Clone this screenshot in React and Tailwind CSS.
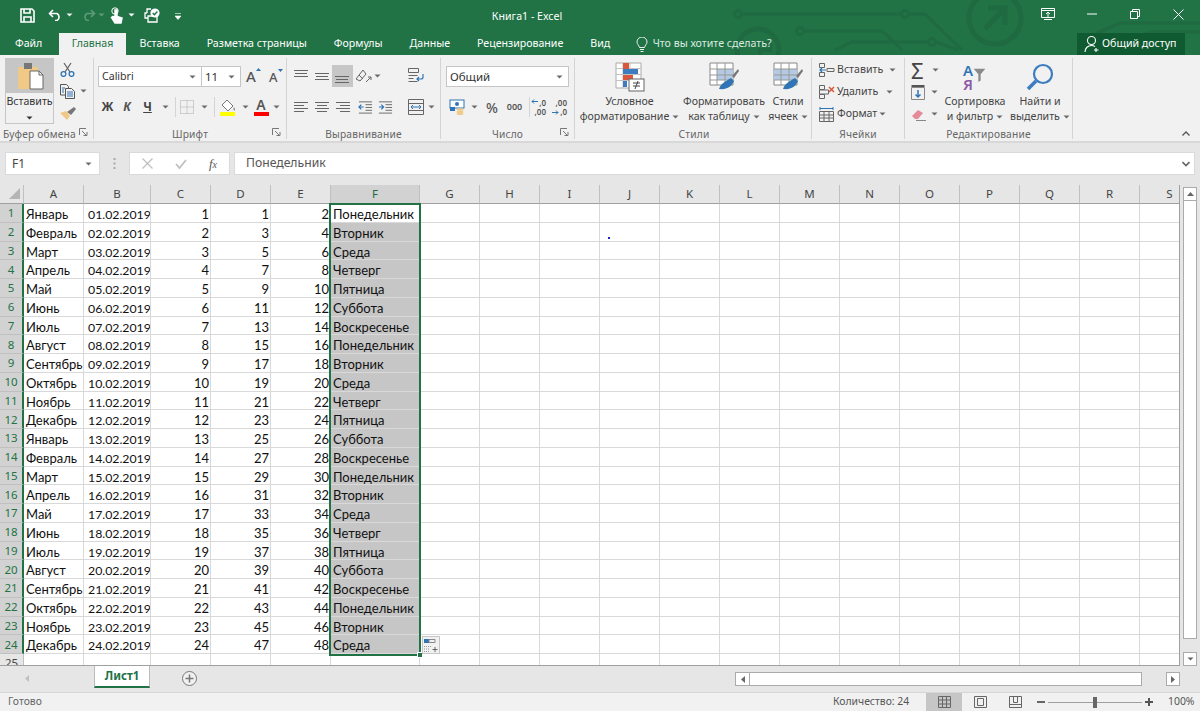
import React from "react";

const G = "#217346";
const Caret = ({ c = "#6a6a6a", cls = "" }) => (
  <svg width="7" height="4" viewBox="0 0 7 4" className={`shrink-0 ${cls}`}><path d="M0.5 0.5h6L3.5 3.5z" fill={c} /></svg>
);
const Launcher = () => (
  <svg width="9" height="9" viewBox="0 0 9 9" className="absolute right-[5px] bottom-[2px]"><path d="M0.5 7V.5H7M3 3l4 4M4.5 7.5H8V4" fill="none" stroke="#777" strokeWidth="1" /></svg>
);
const Lines = ({ ys, xs }) => (
  <svg width="15" height="14" viewBox="0 0 15 14">
    {ys.map((y, i) => <path key={i} d={`M${xs[i][0]} ${y}H${xs[i][1]}`} stroke="#666" strokeWidth="1" />)}
  </svg>
);
const Cell = ({ w, children }) => <div className={`flex items-center justify-center shrink-0 ${w}`}>{children}</div>;

function Watermark() {
  return (
    <svg width="1200" height="55" viewBox="0 0 1200 55" className="absolute left-0 top-0" fill="none" stroke="#1f6a41" strokeWidth="3">
      <circle cx="738" cy="14" r="3.5" />
      <path d="M742 14H901" />
      <circle cx="905" cy="14" r="3.5" />
      <path d="M909 14H925L962 50" />
      <path d="M802 31H882L902 50" />
      <circle cx="800" cy="31" r="3.5" />
      <path d="M835 50L852 42H928" />
      <circle cx="932" cy="42" r="3.5" />
      <path d="M936 42L958 50" />
      <circle cx="758" cy="50" r="21" strokeWidth="5" />
      <path d="M750 43H770V50H760V58" strokeWidth="4" />
      <circle cx="995" cy="18" r="26" strokeWidth="5" />
      <path d="M985 29L1003 10M988 8H1005V25" strokeWidth="5" />
      <path d="M1097 33L1120 23H1200M1130 40L1150 32H1200" />
    </svg>
  );
}

function Qat() {
  return (
    <div className="relative flex items-center h-[30px] pl-[20px]">
      <svg width="15" height="15" viewBox="0 0 15 15" className="mr-[13px]" fill="none" stroke="#fff" strokeWidth="1.6"><path d="M1 1h11l2 2v11H1z" /><path d="M4 1v4h6V1M4 14V9h7v5" /></svg>
      <svg width="15" height="12" viewBox="0 0 15 12" fill="none" stroke="#fff" strokeWidth="1.6"><path d="M5 1L1.5 4.5 5 8M2 4.5h7a4 4 0 0 1 0 7H7" /></svg>
      <Caret c="#e8f0eb" cls="ml-[3px] mr-[8px]" />
      <svg width="15" height="12" viewBox="0 0 15 12" fill="none" stroke="#5f9b7a" strokeWidth="1.6"><path d="M10 1l3.5 3.5L10 8M13 4.5H6a4 4 0 0 0 0 7h2" /></svg>
      <Caret c="#5f9b7a" cls="ml-[2px] mr-[5px]" />
      <svg width="13" height="17" viewBox="0 0 13 17" fill="none" stroke="#fff" strokeWidth="1.5"><circle cx="5" cy="4" r="3.2" strokeWidth="1" /><path d="M5 3v8L3 9.5 1.5 10.5 5 16h6l1-5-5-1.5V3z" fill="#fff" /></svg>
      <Caret c="#fff" cls="ml-[5px] mr-[9px]" />
      <svg width="17" height="15" viewBox="0 0 17 15" fill="none" stroke="#fff" strokeWidth="1.3"><path d="M3 5H1v5h3M4 8h9v6H4zM3 5V1h4" /><circle cx="11" cy="5" r="4.6" fill="#fff" stroke="none" /><path d="M8.7 5l1.7 1.8 3-3.2" stroke={G} strokeWidth="1.4" /></svg>
      <svg width="7" height="7" viewBox="0 0 7 7" className="ml-[14px] mt-[2px]"><path d="M0 0.5h6M0 3h6L3 6.5z" stroke="#fff" strokeWidth=".6" fill="#fff" /></svg>
    </div>
  );
}

function TitleControls() {
  return (
    <div className="absolute right-0 top-0 h-[28px] flex items-center text-white">
      <Cell w="w-[44px]"><svg width="14" height="12" viewBox="0 0 14 12" fill="none" stroke="#fff"><path d="M.5.500h13v9H.5zM.5 2.500h13M7 9V4.500M5 6l2-2 2 2M3 11.500h8" /></svg></Cell>
      <Cell w="w-[43px]"><svg width="10" height="2" viewBox="0 0 10 2"><path d="M0 1h10" stroke="#fff" /></svg></Cell>
      <Cell w="w-[43px]"><svg width="10" height="10" viewBox="0 0 10 10" fill="none" stroke="#fff"><path d="M.5 2.500h7v7h-7zM2.500 2.500v-2h7v7h-2" /></svg></Cell>
      <Cell w="w-[44px]"><svg width="11" height="11" viewBox="0 0 11 11" fill="none" stroke="#fff"><path d="M.5.500l10 10M10.500.500l-10 10" /></svg></Cell>
    </div>
  );
}

function Tabs() {
  const tabs = ["Файл", "Главная", "Вставка", "Разметка страницы", "Формулы", "Данные", "Рецензирование", "Вид"];
  return (
    <div className="relative flex h-[25px] items-end text-[10.6px] text-white">
      {tabs.map((t, i) =>
        i === 1 ? (
          <div key={t} className="h-[22px] w-[67px] bg-[#f1f1f1] text-[#217346] flex items-center justify-center">{t}</div>
        ) : (
          <div key={t} className={`h-[22px] flex items-center ${i === 0 ? "w-[59px] pl-[15px]" : "px-[13.5px]"}`}>{t}</div>
        )
      )}
      <div className="h-[22px] flex items-center ml-[12px] text-[#dcebe2]">
        <svg width="12" height="15" viewBox="0 0 12 15" fill="none" stroke="#e8f0eb" className="mr-[5px]"><path d="M3.500 10.500C3 8 1 7.500 1 5a5 5 0 0 1 10 0c0 2.500-2 3-2.500 5.500zM4 12.500h4M4.500 14.500h3" /></svg>
        Что вы хотите сделать?
      </div>
      <div className="absolute left-[1077px] top-[3px] w-[108px] h-[22px] bg-[#0f5a31] flex items-center pl-[7px]">
        <svg width="16" height="18" viewBox="0 0 16 18" fill="none" stroke="#fff" strokeWidth="1.1" className="mr-[2px]"><circle cx="7.500" cy="5.500" r="4" /><path d="M1 17c0-4 3-6.500 6.500-6.500 1.500 0 2.500.4 3.500 1M12 13v4M10 15h4.500" /></svg>
        Общий доступ
      </div>
    </div>
  );
}

const Sel = ({ w, text, cls = "" }) => (
  <div className={`h-[21px] bg-white border border-[#c6c6c6] flex items-center justify-between pl-[3px] pr-[5px] text-[#333] ${w} ${cls}`}>
    <span>{text}</span><Caret />
  </div>
);

function Group({ cls, label, launcher, children }) {
  return (
    <section className={`relative shrink-0 h-[81px] border-r border-[#d4d4d4] flex flex-col ${cls}`}>
      <div className="h-[68px] flex">{children}</div>
      <div className="h-[13px] pt-[2px] text-center text-[10.2px] leading-[13px] text-[#666] tracking-[0.2px]">{label}</div>
      {launcher && <Launcher />}
    </section>
  );
}

function Clipboard() {
  return (
    <Group cls="w-[94px]" label={<span className="block text-left pl-[3px]">Буфер обмена</span>} launcher>
      <div className="ml-[5px] w-[49px] h-[66px] border border-[#c6c6c6] flex flex-col">
        <div className="h-[34px] bg-[#c6c6c6] flex items-center justify-center">
          <svg width="28" height="28" viewBox="0 0 28 28"><path d="M2 5h20v22H2z" fill="#f0c987" /><rect x="8" y="1" width="8" height="6" fill="#777" /><path d="M14 9h9l4 4v14H14z" fill="#fff" stroke="#666" /><path d="M23 9v4h4" fill="none" stroke="#666" /></svg>
        </div>
        <div className="flex flex-col items-center text-[10.6px] text-[#333] pt-[1px] leading-[14px]">Вставить<Caret c="#333" cls="mt-[8px]" /></div>
      </div>
      <div className="flex flex-col pl-[3px] w-[38px]">
        <div className="h-[22px] flex items-center pl-[3px]"><svg width="15" height="15" viewBox="0 0 15 15" fill="none"><path d="M4 1l6 9M11 1L5 10" stroke="#666" strokeWidth="1.300" /><circle cx="3.500" cy="12" r="2.400" stroke="#2f75b5" strokeWidth="1.300" /><circle cx="11.500" cy="12" r="2.400" stroke="#2f75b5" strokeWidth="1.300" /></svg></div>
        <div className="h-[22px] flex items-center pl-[3px]">
          <svg width="15" height="15" viewBox="0 0 15 15" fill="none" stroke="#555"><path d="M.5.500h6l2 2V11h-8z" /><path d="M5.500 4.500h6l3 3v7h-9z" fill="#f1f1f1" /><path d="M2 4h3M2 6h2M2 8h2M7 8h6M7 10h6M7 12h6" stroke="#2f75b5" /></svg>
          <Caret cls="ml-[5px]" />
        </div>
        <div className="h-[22px] flex items-center pl-[3px]"><svg width="16" height="15" viewBox="0 0 16 15"><path d="M0 7l6-2 4 5-3 4z" fill="#f0c987" /><path d="M7 6l7-5 2 2-5 6z" fill="#777" /></svg></div>
      </div>
    </Group>
  );
}

function Font() {
  return (
    <Group cls="w-[193px]" label="Шрифт" launcher>
      <div className="pl-[4px] pt-[8px] flex flex-col">
        <div className="flex items-center h-[21px]">
          <Sel w="w-[104px]" text="Calibri" cls="text-[10.6px]" />
          <Sel w="w-[40px]" text="11" cls="ml-[-1px] text-[11.5px]" />
          <div className="ml-[5px] w-[21px] text-[15px] text-[#555] font-medium flex"><span>A</span><svg width="5" height="3" viewBox="0 0 5 3" className="mt-[3px]"><path d="M0 3l2.500-3L5 3z" fill="#2f75b5" /></svg></div>
          <div className="ml-[2px] w-[18px] text-[13px] text-[#555] font-medium flex mt-[2px]"><span>A</span><svg width="5" height="3" viewBox="0 0 5 3" className="mt-[1px]"><path d="M0 0l2.500 3L5 0z" fill="#2f75b5" /></svg></div>
        </div>
        <div className="flex items-center h-[20px] mt-[10px] text-[#444]">
          <Cell w="w-[19px]"><b className="text-[12px]">Ж</b></Cell>
          <Cell w="w-[20px]"><b className="text-[12px] italic text-[#555]">К</b></Cell>
          <Cell w="w-[21px]"><b className="text-[12px] underline">Ч</b></Cell>
          <Cell w="w-[14px]"><Caret /></Cell>
          <div className="w-px h-[20px] bg-[#d4d4d4] ml-[3px]" />
          <Cell w="w-[22px]"><svg width="14" height="14" viewBox="0 0 14 14" fill="none" stroke="#aaa" strokeDasharray="1 1"><path d="M.5.500h13v13H.5zM7 .5v13M.5 7h13" /></svg></Cell>
          <Cell w="w-[13px]"><Caret /></Cell>
          <div className="w-px h-[20px] bg-[#d4d4d4] ml-[3px]" />
          <Cell w="w-[26px]"><svg width="16" height="17" viewBox="0 0 16 17"><path d="M7 1l6 6-5 5-6-6z" fill="#fff" stroke="#777" /><path d="M14 8c1 2 1.500 3 .5 3.500S13 10 14 8z" fill="#888" /><rect y="13" width="15" height="4" fill="#ffff00" /></svg></Cell>
          <Cell w="w-[8px]"><Caret /></Cell>
          <Cell w="w-[24px]"><div className="flex flex-col items-center w-[15px] leading-[12px] text-[14px] font-semibold text-[#555]"><span>A</span><span className="w-[15px] h-[4px] bg-[#ff0000] mt-[1px]" /></div></Cell>
          <Cell w="w-[6px]"><Caret /></Cell>
        </div>
      </div>
    </Group>
  );
}

function Align() {
  const A = ({ ys, xs }) => <Lines ys={ys} xs={xs} />;
  const f = [0, 14];
  return (
    <Group cls="w-[154px]" label="Выравнивание">
      <div className="pl-[7px] pt-[7px] flex flex-col">
        <div className="flex items-center h-[22px]">
          <Cell w="w-[15px]"><A ys={[1.500, 4.500, 7.500]} xs={[f, [1, 13], f]} /></Cell>
          <Cell w="w-[6px]"><span /></Cell>
          <Cell w="w-[15px]"><A ys={[4.500, 7.500, 10.500]} xs={[f, [1, 13], f]} /></Cell>
          <div className="w-[21px] h-[22px] bg-[#c6c6c6] ml-[2px] flex items-center justify-center"><A ys={[7.500, 10.500, 13.500]} xs={[f, [1, 13], f]} /></div>
          <Cell w="w-[20px]"><svg width="17" height="15" viewBox="0 0 17 15" fill="none" stroke="#666"><path d="M1 10L8 1l3 4-6 7zM4 6l4 4M11 13l5-5M16 8h-3M16 8v3" /></svg></Cell>
          <Cell w="w-[9px]"><Caret /></Cell>
        </div>
        <div className="flex items-center h-[20px] mt-[10px]">
          <Cell w="w-[15px]"><A ys={[2.500, 5.500, 8.500, 11.500]} xs={[f, [0, 10], f, [0, 10]]} /></Cell>
          <Cell w="w-[6px]"><span /></Cell>
          <Cell w="w-[15px]"><A ys={[2.500, 5.500, 8.500, 11.500]} xs={[f, [2, 12], f, [2, 12]]} /></Cell>
          <Cell w="w-[6px]"><span /></Cell>
          <Cell w="w-[15px]"><A ys={[2.500, 5.500, 8.500, 11.500]} xs={[f, [4, 14], f, [4, 14]]} /></Cell>
          <Cell w="w-[7px]"><span /></Cell>
          <Cell w="w-[15px]"><svg width="16" height="14" viewBox="0 0 16 14" fill="none"><path d="M1 1.500h14M8 4.500h7M8 7.500h7M8 10.500h7M1 13.500h14" stroke="#666" /><path d="M6 7H1M3.500 4.500L1 7l2.500 2.500" stroke="#2f75b5" strokeWidth="1.300" /></svg></Cell>
          <Cell w="w-[5px]"><span /></Cell>
          <Cell w="w-[15px]"><svg width="16" height="14" viewBox="0 0 16 14" fill="none"><path d="M1 1.500h14M1 13.500h14M8 4.500h7M8 7.500h7M8 10.500h7" stroke="#666" /><path d="M1 7h5M3.500 4.500L6 7 3.500 9.500" stroke="#2f75b5" strokeWidth="1.300" /></svg></Cell>
        </div>
      </div>
      <div className="pl-[15px] pt-[7px] flex flex-col">
        <div className="h-[20px] flex items-center"><svg width="16" height="15" viewBox="0 0 16 15" fill="none"><path d="M.5.500h10v4H.5zM.5 7.500h9M.5 10.500h5M.5 13.500h9" stroke="#666" /><path d="M15 6v3a2 2 0 0 1-2 2H9M11 9l-2 2 2 2" stroke="#2f75b5" strokeWidth="1.200" /></svg></div>
        <div className="h-[20px] mt-[12px] flex items-center"><svg width="16" height="16" viewBox="0 0 16 16" fill="none"><path d="M.5.500h15v15H.5zM.5 4.500h15M.5 11.500h15" stroke="#666" /><path d="M3 8h10M5 6L3 8l2 2M11 6l2 2-2 2" stroke="#2f75b5" /></svg><Caret cls="ml-[4px]" /></div>
      </div>
    </Group>
  );
}

function NumberG() {
  return (
    <Group cls="w-[134px]" label="Число" launcher>
      <div className="pl-[5px] pt-[8px] flex flex-col">
        <Sel w="w-[123px]" text="Общий" cls="text-[11.5px]" />
        <div className="flex items-center h-[20px] mt-[10px]">
          <Cell w="w-[21px]"><svg width="16" height="16" viewBox="0 0 16 16"><rect x="1" y="1" width="14" height="8" fill="#fff" stroke="#2f75b5" /><circle cx="8" cy="5" r="2" fill="#2f75b5" /><rect x="1" y="8" width="5" height="4" fill="#2f75b5" /><ellipse cx="11" cy="10.500" rx="3.500" ry="1.200" fill="#f0c987" /><ellipse cx="11" cy="13" rx="3.500" ry="1.200" fill="#f0c987" /><ellipse cx="11" cy="15" rx="3.500" ry="1" fill="#f0c987" /></svg></Cell>
          <Cell w="w-[14px]"><Caret /></Cell>
          <Cell w="w-[22px]"><span className="text-[14px] text-[#555] font-medium">%</span></Cell>
          <Cell w="w-[23px]"><span className="text-[9px] text-[#555] font-semibold">000</span></Cell>
          <div className="w-px h-[20px] bg-[#d4d4d4] ml-[3px]" />
          <Cell w="w-[17px]">
            <span className="relative text-[8px] leading-[9px] text-[#555] text-right font-semibold pl-[2px] w-[15px]">,0<br />,00
              <svg width="7" height="5" viewBox="0 0 7 5" fill="none" stroke="#2f75b5" className="absolute left-0 top-[1px]"><path d="M7 2.500H1M3 .5l-2 2 2 2" /></svg>
            </span>
          </Cell>
          <Cell w="w-[4px]"><span /></Cell>
          <Cell w="w-[17px]">
            <span className="relative text-[8px] leading-[9px] text-[#555] text-right font-semibold w-[15px]">,00<br />,0
              <svg width="7" height="5" viewBox="0 0 7 5" fill="none" stroke="#2f75b5" className="absolute left-0 bottom-[1px]"><path d="M0 2.500h6M4 .5l2 2-2 2" /></svg>
            </span>
          </Cell>
        </div>
      </div>
    </Group>
  );
}

const Big = ({ w, icon, l1, l2, mt = "mt-[4px]" }) => (
  <div className={`shrink-0 flex flex-col items-center text-[10.6px] leading-[15px] text-[#444] ${w}`}>
    <div className={`h-[30px] flex items-center ${mt}`}>{icon}</div>
    <div className="mt-[2px] whitespace-nowrap">{l1}</div>
    <div className="flex items-center gap-[3px] whitespace-nowrap">{l2}<Caret /></div>
  </div>
);

const TableIco = ({ fill }) => (
  <svg width="30" height="30" viewBox="0 0 30 30">
    <path d="M1 1h23v22H1z" fill="#fff" stroke="#888" />
    <path d={fill} fill="#b4c9e3" />
    <path d="M1 7h23M1 13h23M1 18h23M8 1v22M16 1v22" stroke="#999" fill="none" />
    <path d="M23 14l6-7 1 2-5 7z" fill="#777" />
    <path d="M10 27c2-6 7-8 12-11l3 3c-2 4-5 9-15 8z" fill="#2f75b5" />
  </svg>
);

function Styles() {
  return (
    <Group cls="w-[237px] pl-[2px]" label="Стили">
      <Big w="w-[105px]" l1="Условное" l2="форматирование" icon={
        <svg width="30" height="30" viewBox="0 0 30 30">
          <path d="M1 1h25v25H1z" fill="#fff" stroke="#aaa" />
          <path d="M8 1v25M15 1v25M1 6.500h25M1 12.500h25M1 18.500h25" stroke="#c2c2c2" />
          <rect x="8" y="1" width="6" height="6" fill="#d9573a" /><rect x="8" y="7" width="15" height="5" fill="#3d7cc0" /><rect x="8" y="13" width="10" height="5" fill="#d9573a" /><rect x="8" y="19" width="4" height="6" fill="#3d7cc0" />
          <rect x="14" y="17" width="15" height="12" fill="#fff" stroke="#666" />
          <path d="M18 21h7M18 24h7M23 19l-3 8" stroke="#444" fill="none" />
        </svg>} />
      <Big w="w-[84px]" l1="Форматировать" l2="как таблицу" icon={<TableIco fill="M8 7h16v6H8zM8 13h16v5H8z" />} />
      <Big w="w-[44px]" l1="Стили" l2="ячеек" icon={<TableIco fill="M1 7h23v11H1z" />} />
    </Group>
  );
}

const CellRow = ({ icon, text, ml }) => (
  <div className="h-[22px] flex items-center text-[10.6px] text-[#444]">
    <div className="w-[18px] shrink-0">{icon}</div>
    <span>{text}</span>
    <Caret cls={ml} />
  </div>
);

function Cells() {
  return (
    <Group cls="w-[93px]" label="Ячейки">
      <div className="pl-[7px] pt-[1px] flex flex-col">
        <CellRow text="Вставить" ml="ml-[6px]" icon={<svg width="16" height="14" viewBox="0 0 16 14" fill="none" stroke="#666"><path d="M.5.500h5v4h-5zM.5 9.500h5v4h-5zM8 5.500h7v3H8z" /><path d="M1 7h6M3 5L1 7l2 2" stroke="#2f75b5" strokeWidth="1.200" /></svg>} />
        <CellRow text="Удалить" ml="ml-[8px]" icon={<svg width="16" height="14" viewBox="0 0 16 14" fill="none" stroke="#666"><path d="M.5.500h5v4h-5zM.5 9.500h5v4h-5zM.5 5h9v4h-9z" /><path d="M10 2l5 5M15 2l-5 5" stroke="#d9573a" strokeWidth="1.500" /></svg>} />
        <CellRow text="Формат" ml="ml-[2px]" icon={<svg width="15" height="15" viewBox="0 0 15 15" fill="none" stroke="#666"><path d="M.5 4.500h14v10H.5zM.5 8h14M.5 11h14M5 4.500v10M10 4.500v10" /><path d="M1 1.500h13M1 0v3M14 0v3" stroke="#2f75b5" /></svg>} />
      </div>
    </Group>
  );
}

function Editing() {
  return (
    <Group cls="w-[168px]" label="Редактирование">
      <div className="w-[39px] pl-[6px] pt-[1px] flex flex-col shrink-0">
        <div className="h-[22px] flex items-center"><span className="w-[21px] text-[22px] leading-[18px] text-[#444]">Σ</span><Caret /></div>
        <div className="h-[22px] flex items-center"><svg width="14" height="15" viewBox="0 0 14 15" className="mr-[6px]" fill="none"><path d="M.5 2.500h13v12H.5z" stroke="#888" /><path d="M.5 1h13" stroke="#555" strokeWidth="2" /><path d="M7 5v7M4.500 9.500L7 12l2.500-2.500" stroke="#2f75b5" strokeWidth="1.500" /></svg><Caret /></div>
        <div className="h-[22px] flex items-center"><svg width="15" height="13" viewBox="0 0 15 13" className="mr-[5px]"><path d="M1 8l6-6 5 3-5 6H4z" fill="#e58a98" /><path d="M5 12.500h10" stroke="#888" /></svg><Caret /></div>
      </div>
      <div className="w-[60px] shrink-0 ml-[1px]">
        <Big w="w-[60px]" l1="Сортировка" l2="и фильтр" icon={
          <span className="flex items-start">
            <span className="flex flex-col text-[15px] leading-[14px] font-semibold"><span className="text-[#2f75b5]">А</span><span className="text-[#8e5aa8]">Я</span></span>
            <svg width="15" height="14" viewBox="0 0 15 18" className="mt-[5px] ml-[-1px]"><path d="M0 1h15L9 8v8l-3 2V8z" fill="#8a8a8a" /></svg>
          </span>} />
      </div>
      <div className="w-[64px] shrink-0 ml-[3px]">
        <Big w="w-[64px]" l1="Найти и" l2="выделить" icon={
          <svg width="28" height="28" viewBox="0 0 28 28" fill="none"><circle cx="17" cy="11" r="9" stroke="#3d7cc0" strokeWidth="2.200" /><path d="M10 18l-8 8" stroke="#3d7cc0" strokeWidth="3.500" /></svg>} />
      </div>
    </Group>
  );
}

function Ribbon() {
  return (
    <div className="relative h-[88px] pt-[3px] bg-[#f1f1f1] flex border-b-2 border-[#d8d8d8]">
      <Clipboard /><Font /><Align /><NumberG /><Styles /><Cells /><Editing />
      <svg width="8" height="5" viewBox="0 0 8 5" className="absolute right-[10px] bottom-[5px]" fill="none" stroke="#555" strokeWidth="1.300"><path d="M.5 4.500L4 1l3.500 3.500" /></svg>
    </div>
  );
}

function FormulaBar() {
  return (
    <div className="h-[42px] pt-[9px] pl-[5px] pr-[5px] flex items-start bg-[#e6e6e6]">
      <div className="w-[95px] h-[23px] bg-white border border-[#dadada] flex items-center justify-between pl-[6px] pr-[7px] text-[12px] text-[#444]">F1<Caret /></div>
      <div className="w-[29px] h-[23px] flex items-center justify-center text-[#aaa]"><svg width="3" height="11" viewBox="0 0 3 11"><path d="M1.500 0v2M1.500 4.500v2M1.500 9v2" stroke="#aaa" strokeWidth="2" /></svg></div>
      <div className="w-[101px] h-[23px] bg-white border border-[#dadada] flex items-center text-[#bbb]">
        <Cell w="w-[34px]"><svg width="11" height="11" viewBox="0 0 11 11" fill="none" stroke="#c0c0c0" strokeWidth="1.300"><path d="M.5.500l10 10M10.500.500l-10 10" /></svg></Cell>
        <Cell w="w-[33px]"><svg width="12" height="10" viewBox="0 0 12 10" fill="none" stroke="#c0c0c0" strokeWidth="1.800"><path d="M1 5l3.500 4L11 1" /></svg></Cell>
        <Cell w="w-[32px]"><span className="font-['Liberation_Serif'] italic text-[13px] text-[#555]">f<span className="text-[10px]">x</span></span></Cell>
      </div>
      <div className="ml-[4px] w-[961px] h-[23px] bg-white border border-[#dadada] flex items-center justify-between pl-[11px] pr-[4px] text-[12.2px] text-[#555]">
        Понедельник
        <svg width="8" height="6" viewBox="0 0 8 6" fill="none" stroke="#666" strokeWidth="1.600"><path d="M.5 1L4 4.500 7.500 1" /></svg>
      </div>
    </div>
  );
}

const MONTHS = ["Январь", "Февраль", "Март", "Апрель", "Май", "Июнь", "Июль", "Август", "Сентябрь", "Октябрь", "Ноябрь", "Декабрь"];
const DAYS = ["Понедельник", "Вторник", "Среда", "Четверг", "Пятница", "Суббота", "Воскресенье"];
const LETTERS = "ABCDEFGHIJKLMNOPQRS".split("");
const RIGHT = "border-r border-b border-[#d9d9d9] overflow-hidden whitespace-nowrap";

function Sheet() {
  const rows = Array.from({ length: 24 }, (_, i) => i);
  return (
    <div className="relative w-[1180px] h-[481px] overflow-hidden bg-white border-r border-b border-[#a0a0a0]">
      <div className="grid w-[1200px] grid-cols-[24px_60px_67px_60px_60px_60px_89px_repeat(13,60px)] grid-rows-[19px] auto-rows-[18.75px] font-['Lato','Noto_Sans',sans-serif] text-[13px] leading-[21px] text-[#111]">
        <div className="bg-[#e6e6e6] border-b border-[#a0a0a0] border-r border-r-[#c0c0c0] flex items-end justify-end pr-[3px] pb-[4px]"><svg width="11" height="11" viewBox="0 0 11 11"><path d="M11 0v11H0z" fill="#b4b4b4" /></svg></div>
        {LETTERS.map((l) => (
          <div key={l} className={`flex items-center justify-center font-['Noto_Sans'] text-[11.5px] leading-[16px] border-b border-[#a0a0a0] border-r border-r-[#c0c0c0] ${l === "F" ? "bg-[#d2d2d2] text-[#1e6b41]" : "bg-[#e6e6e6] text-[#444]"}`}>{l}</div>
        ))}
        {rows.map((i) => (
          <React.Fragment key={i}>
            <div className="bg-[#d2d2d2] text-[#217346] font-['Noto_Sans'] text-[11.5px] leading-[16px] pt-[1px] flex items-center justify-center border-b border-[#c0c0c0] border-r-2 border-r-[#217346]">{i + 1}</div>
            <div className={`${RIGHT} pl-[2px]`}>{MONTHS[i % 12]}</div>
            <div className={`${RIGHT} pl-[4px] text-[12.3px]`}>{String(i + 1).padStart(2, "0")}.02.2019</div>
            <div className={`${RIGHT} text-right pr-[1px]`}>{i + 1}</div>
            <div className={`${RIGHT} text-right pr-[1px]`}>{2 * i + 1}</div>
            <div className={`${RIGHT} text-right pr-[1px]`}>{2 * i + 2}</div>
            <div className={`${RIGHT} pl-[2px] ${i === 0 ? "" : "bg-[#c6c6c6] border-[#b8b8b8]"}`}>{DAYS[i % 7]}</div>
            {LETTERS.slice(6).map((l) => <div key={l} className={RIGHT} />)}
          </React.Fragment>
        ))}
        <div className="bg-[#e6e6e6] text-[#444] font-['Noto_Sans'] text-[11.5px] leading-[16px] flex items-center justify-center border-r border-[#c0c0c0]">25</div>
        {LETTERS.map((l) => <div key={l} className={RIGHT} />)}
      </div>
      <div className="absolute left-[329px] top-[18px] w-[92px] h-[453px] border-2 border-[#217346]">
        <div className="absolute -right-[4px] -bottom-[4px] w-[6px] h-[6px] bg-[#217346] border border-white" />
      </div>
      <div className="absolute left-[422px] top-[451px] w-[18px] h-[18px] bg-[#f1f1f1] border border-[#c6c6c6] flex items-center justify-center">
        <svg width="14" height="13" viewBox="0 0 14 13" fill="none"><rect x="0" y="0" width="5" height="4" fill="#2f75b5" /><path d="M5 .5h6v3H5z" stroke="#888" /><path d="M0 7.500h8M0 10h6M0 12.500h6" stroke="#999" strokeDasharray="1 1" /><path d="M11 8v5M8.500 10.500h5" stroke="#666" /></svg>
      </div>
      <div className="absolute left-[608px] top-[52px] w-[2px] h-[2px] bg-[#2222cc]" />
    </div>
  );
}

function VScroll() {
  return (
    <div className="ml-[3px] w-[14px] h-[479px] mt-[2px] flex flex-col bg-[#e6e6e6]">
      <div className="h-[14px] bg-white border border-[#ababab] flex items-center justify-center"><svg width="7" height="4" viewBox="0 0 7 4"><path d="M0 4l3.500-4L7 4z" fill="#666" /></svg></div>
      <div className="h-[438px] bg-white border-x border-b border-[#ababab]" />
      <div className="flex-1" />
      <div className="h-[14px] bg-white border border-[#ababab] flex items-center justify-center"><Caret c="#666" /></div>
    </div>
  );
}

function SheetBar() {
  return (
    <div className="h-[26px] bg-[#e6e6e6] flex items-start">
      <div className="flex w-[94px] h-[25px] items-center">
        <Cell w="w-[54px]"><svg width="4" height="7" viewBox="0 0 4 7"><path d="M4 0v7L0 3.500z" fill="#c0c0c0" /></svg></Cell>
        <Cell w="w-[0px]"><svg width="4" height="7" viewBox="0 0 4 7"><path d="M0 0v7l4-3.500z" fill="#c0c0c0" /></svg></Cell>
      </div>
      <div className="w-[56px] h-[23px] bg-white border-l border-r border-[#bbb] border-b-2 border-b-[#217346] flex items-center justify-center text-[11.5px] font-bold text-[#217346] mt-[-1px]">Лист1</div>
      <div className="w-[78px] h-[25px] flex items-center justify-center">
        <svg width="15" height="15" viewBox="0 0 15 15" fill="#f1f1f1" stroke="#777"><circle cx="7.500" cy="7.500" r="7" /><path d="M7.500 3.500v8M3.500 7.500h8" strokeWidth="1.500" /></svg>
      </div>
      <div className="ml-[507px] mt-[6px] flex h-[14px] w-[445px]">
        <div className="w-[15px] bg-white border border-[#ababab] flex items-center justify-center"><svg width="4" height="7" viewBox="0 0 4 7"><path d="M4 0v7L0 3.500z" fill="#666" /></svg></div>
        <div className="w-[392px] bg-white border-y border-r border-[#ababab]" />
        <div className="w-[24px]" />
        <div className="w-[14px] bg-white border border-[#ababab] flex items-center justify-center"><svg width="4" height="7" viewBox="0 0 4 7"><path d="M0 0v7l4-3.500z" fill="#666" /></svg></div>
      </div>
    </div>
  );
}

function StatusBar() {
  return (
    <div className="h-[19px] bg-[#f1f1f1] border-t border-[#d6d6d6] flex items-center text-[10.4px] text-[#555]">
      <span className="pl-[8px] w-[833px] text-[#666]">Готово</span>
      <span className="w-[93px] whitespace-nowrap">Количество: 24</span>
      <div className="w-[36px] h-[18px] bg-[#c6c6c6] flex items-center justify-center">
        <svg width="13" height="12" viewBox="0 0 13 12" fill="none" stroke="#666"><path d="M.5.500h12v11H.5zM4.500.5v11M8.500.5v11M.5 4h12M.5 8h12" /></svg>
      </div>
      <Cell w="w-[36px]"><svg width="13" height="12" viewBox="0 0 13 12" fill="none" stroke="#666"><path d="M.5.500h12v11H.5zM3.500 2.500h6v7h-6z" /></svg></Cell>
      <Cell w="w-[35px]"><svg width="13" height="12" viewBox="0 0 13 12" fill="none" stroke="#666"><path d="M.5.500h12v11H.5zM4.500.5v6h4v-6M.5 8.500h12" /></svg></Cell>
      <div className="w-[8px] ml-[4px] h-[2px] bg-[#666]" />
      <div className="relative ml-[3px] w-[94px] h-px bg-[#a0a0a0]"><div className="absolute left-[45px] -top-[5px] w-[4px] h-[11px] bg-[#666]" /></div>
      <svg width="8" height="8" viewBox="0 0 8 8" className="ml-[3px]"><path d="M4 0v8M0 4h8" stroke="#555" strokeWidth="2" /></svg>
      <span className="ml-[15px]">100%</span>
    </div>
  );
}

export default function App() {
  return (
    <div className="relative w-[1200px] h-[711px] overflow-hidden flex flex-col bg-[#e6e6e6] font-['Noto_Sans',sans-serif]">
      <header className="relative h-[55px] bg-[#217346] shrink-0">
        <Watermark />
        <Qat />
        <div className="absolute left-0 w-[1054px] top-[8px] text-center text-[10.6px] leading-[17px] text-white">Книга1 - Excel</div>
        <TitleControls />
        <Tabs />
      </header>
      <Ribbon />
      <FormulaBar />
      <div className="flex h-[481px]">
        <Sheet />
        <VScroll />
      </div>
      <SheetBar />
      <StatusBar />
    </div>
  );
}
